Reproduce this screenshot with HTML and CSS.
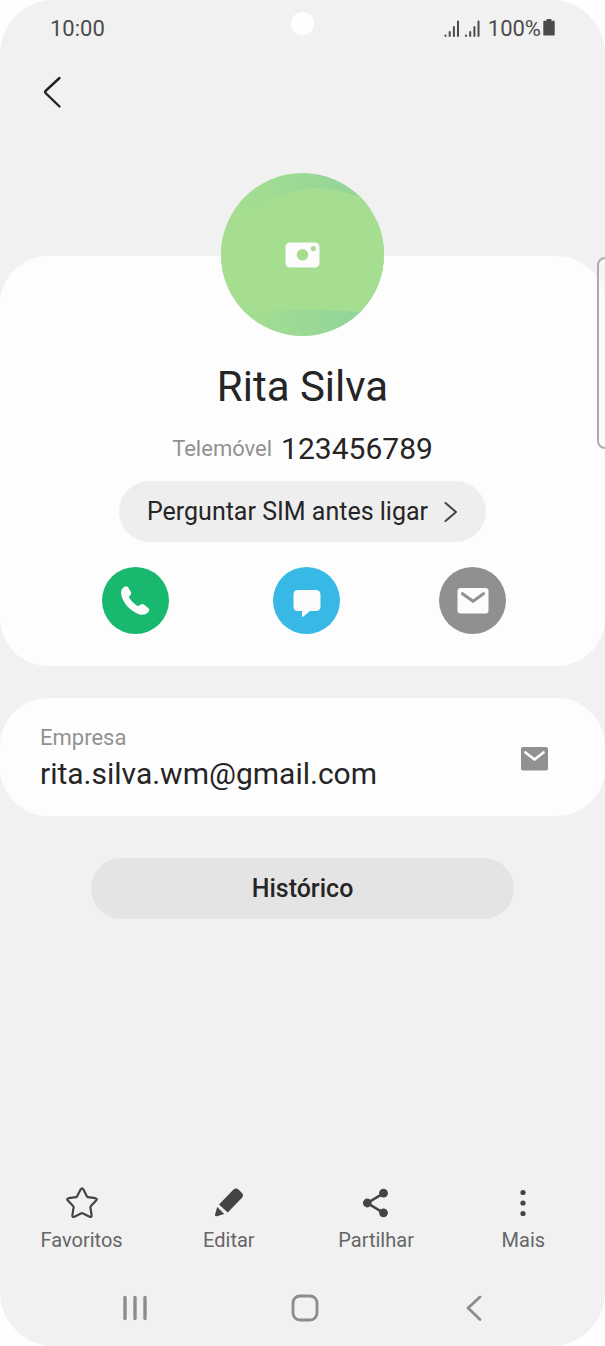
FILE: index.html
```html
<!DOCTYPE html>
<html lang="pt">
<head>
<meta charset="utf-8">
<meta name="viewport" content="width=device-width, initial-scale=1">
<title>Rita Silva</title>
<link rel="stylesheet" href="styles.css">
</head>
<body>
<div class="screen">
  <div class="camera-hole"></div>
  <div class="edge-handle"></div>

  <header class="status-bar">
    <span>10:00</span>
    <div class="status-icons">
      <svg class="signal" width="37" height="18" viewBox="0 0 37 18" aria-hidden="true">
        <path d="M1.500 15.500v.5M5.700 12v4M9.900 7v9M14 1.500V16M22 15.500v.5M26.200 12v4M30.400 7v9M34.500 1.500V16"/>
      </svg>
      <span>100%</span>
      <svg class="battery" width="12" height="21" viewBox="0 0 12 21" aria-hidden="true">
        <path fill="#4b4b4b" d="M3.500 1h5v1.800H11q1 0 1 1v13.700q0 1-1 1H1q-1 0-1-1V3.800q0-1 1-1h2.500z"/>
      </svg>
    </div>
  </header>

  <nav class="app-bar">
    <button class="icon-button" type="button" aria-label="Voltar">
      <svg width="20" height="34" viewBox="0 0 20 34" fill="none" stroke="#222" stroke-width="2.400" stroke-linecap="round" stroke-linejoin="round"><path d="M17.500 3 3.500 16q-1 1 0 2l14 13.500"/></svg>
    </button>
  </nav>

  <main class="content">
    <section class="card profile">
      <button class="avatar" type="button" aria-label="Alterar fotografia">
        <svg viewBox="0 0 163 163" aria-hidden="true">
          <defs>
            <clipPath id="round"><circle cx="81.500" cy="81.500" r="81.500"/></clipPath>
            <linearGradient id="shade" x1="0" x2="1">
              <stop offset="0.100" stop-color="#a5de90"/>
              <stop offset="0.900" stop-color="#90d49a"/>
            </linearGradient>
          </defs>
          <g clip-path="url(#round)">
            <path fill="url(#shade)" d="M0 0h163v163H0z"/>
            <path fill="#a5de90" d="M0 62Q54 15 96 15Q120 15 163 33V142Q90 132 0 141z"/>
          </g>
          <path fill="#fcfcfc" fill-rule="evenodd" d="M69.500 69.500h24q5 0 5 5v15q0 5-5 5h-24q-5 0-5-5v-15q0-5 5-5zM81.500 76a5.800 5.800 0 1 0 0 11.600 5.800 5.800 0 1 0 0-11.600zM92.300 73a2.600 2.600 0 1 0 0 5.200 2.600 2.600 0 1 0 0-5.200z"/>
        </svg>
      </button>
      <h1 class="name">Rita Silva</h1>
      <p class="phone"><span class="label">Telemóvel</span><span class="value">123456789</span></p>
      <button class="pill sim" type="button">
        Perguntar SIM antes ligar
        <svg width="14" height="22" viewBox="0 0 14 22" fill="none" stroke="#444" stroke-width="2" stroke-linecap="round" stroke-linejoin="round" aria-hidden="true"><path d="M1.500 2 12 11 1.500 20"/></svg>
      </button>
      <div class="actions">
        <button class="action call" type="button" aria-label="Ligar">
          <svg viewBox="0 0 67 67"><path fill="#fcfcfc" d="M22.500 19.800c1.500-1 2.800-.6 3.700.8l2.600 4.200c.8 1.400.5 2.500-.6 3.500l-1.500 1.400c1.800 3.800 5.200 7.200 9.400 9.600l2.600-1.700c1.300-.8 2.300-.7 3.500.2l4 3.200c1.300 1.200 1.500 2.500.4 3.800-2 2.600-5.500 3.600-9 2.600-9.600-3.400-17.200-11.500-18.500-20.900-.3-3.200.9-5.200 3.400-6.700z"/></svg>
        </button>
        <button class="action message" type="button" aria-label="Mensagem">
          <svg viewBox="0 0 67 67"><path fill="#fcfcfc" d="M25 23h17.500q5 0 5 5v11.500q0 4.500-5 4.500H37l-6.500 5.500q-1.500 1-1.500-.5v-5h-4q-4.500 0-4.500-4.500V28q0-5 4.500-5z"/></svg>
        </button>
        <button class="action mail" type="button" aria-label="E-mail">
          <svg viewBox="0 0 67 67" fill="none"><rect x="18.500" y="21" width="31" height="25.500" rx="3" fill="#fcfcfc"/><path stroke="#909090" stroke-width="3" stroke-linecap="round" stroke-linejoin="round" d="m23.500 26.700 10.500 7.500 10.500-7.500"/></svg>
        </button>
      </div>
    </section>

    <section class="card email">
      <div>
        <p class="label">Empresa</p>
        <p class="value">rita.silva.wm@gmail.com</p>
      </div>
      <button class="icon-button" type="button" aria-label="Enviar e-mail">
        <svg width="27" height="24" viewBox="0 0 27 24" fill="none"><rect y="0" width="27" height="23.500" rx="1.800" fill="#919191"/><path stroke="#fcfcfc" stroke-width="2.800" stroke-linecap="round" stroke-linejoin="round" d="m4.500 5.500 9 7 9-7"/></svg>
      </button>
    </section>

    <button class="pill history" type="button">Histórico</button>
  </main>

  <footer class="footer">
    <div class="tabs">
      <button class="tab" type="button">
        <svg width="34" height="34" viewBox="0 0 34 34" fill="none" stroke="#444" stroke-width="2.200" stroke-linejoin="round"><path d="M15.700 3.300q1.300-2 2.600 0L22 10.500q.2.500.8.600l7.600 1.100q2.200.5.900 2.100l-5.600 5.900q-.4.400-.3 1l1.200 8.100q.1 2.200-2 1.500l-7-3.500q-.6-.3-1.200 0l-7 3.500q-2.100.7-2-1.500l1.200-8.100q.1-.6-.3-1l-5.600-5.900q-1.300-1.600.9-2.100l7.600-1.100q.6-.1.800-.6z"/></svg>
        Favoritos
      </button>
      <button class="tab" type="button">
        <svg width="34" height="34" viewBox="0 0 34 34" fill="#444"><path d="M7 18.500 21 4q3-2.500 5.500-.5L30 7q2 2.500 0 4.700L15.700 26.500zM5.200 21l7 7-7.500 2.300q-1.900.3-1.700-1.500z"/></svg>
        Editar
      </button>
      <button class="tab" type="button">
        <svg width="34" height="34" viewBox="0 0 34 34" fill="#444"><path fill="none" stroke="#444" stroke-width="2.600" d="M24.500 7.300 8.300 17l16.200 9.800"/><circle cx="8.300" cy="17" r="4.400"/><circle cx="24.500" cy="7.200" r="4.400"/><circle cx="24.500" cy="26.800" r="4.400"/></svg>
        Partilhar
      </button>
      <button class="tab" type="button">
        <svg width="34" height="34" viewBox="0 0 34 34" fill="#444"><circle cx="17" cy="6.500" r="2.600"/><circle cx="17" cy="17" r="2.600"/><circle cx="17" cy="27.500" r="2.600"/></svg>
        Mais
      </button>
    </div>
    <nav class="system-nav">
      <button class="icon-button" type="button" aria-label="Recentes">
        <svg width="28" height="28" viewBox="0 0 28 28" stroke="#8c8c8c" stroke-width="3.400" stroke-linecap="round"><path d="M4 3.500v21M14 3.500v21M24 3.500v21"/></svg>
      </button>
      <button class="icon-button" type="button" aria-label="Início">
        <svg width="28" height="28" viewBox="0 0 28 28" fill="none" stroke="#8c8c8c" stroke-width="2.800"><rect x="2" y="2" width="24" height="24" rx="7"/></svg>
      </button>
      <button class="icon-button" type="button" aria-label="Anterior">
        <svg width="28" height="28" viewBox="0 0 28 28" fill="none" stroke="#8c8c8c" stroke-width="2.800" stroke-linecap="round" stroke-linejoin="round"><path d="M20 3 8 14l12 11.500"/></svg>
      </button>
    </nav>
  </footer>
</div>
</body>
</html>
```

FILE: styles.css
```css
* {
  box-sizing: border-box;
}

body {
  margin: 0;
  background: #fefefe;
  color: #252525;
  font-family: Roboto, "Noto Sans", sans-serif;
}

h1,
p {
  margin: 0;
  font-weight: 400;
}

button {
  border: 0;
  padding: 0;
  background: none;
  color: inherit;
  font: inherit;
  cursor: pointer;
}

svg {
  display: block;
}

.screen {
  position: relative;
  display: flex;
  flex-direction: column;
  min-height: 100vh;
  overflow: hidden;
  border-radius: 54px;
  background: #f1f1f1;
}

.camera-hole {
  position: absolute;
  top: 12px;
  left: 50%;
  width: 23px;
  height: 23px;
  margin-left: -12px;
  border-radius: 50%;
  background: #fefefe;
}

.edge-handle {
  position: absolute;
  z-index: 1;
  top: 257px;
  right: -8px;
  width: 16px;
  height: 192px;
  border: 2px solid #adadad;
  border-radius: 8px;
  background: rgb(250 250 250 / 50%);
}

.status-bar {
  display: flex;
  align-items: center;
  justify-content: space-between;
  height: 57px;
  padding: 0 50px;
  color: #4b4b4b;
  font-size: 22px;
}

.status-icons {
  display: flex;
  align-items: center;
}

.signal {
  margin-right: 7px;
  fill: none;
  stroke: #4b4b4b;
  stroke-width: 2;
  stroke-linecap: round;
}

.battery {
  margin-left: 2px;
  padding-bottom: 1px;
}

.app-bar {
  height: 69px;
  padding: 18px 42px;
}

.content {
  display: flex;
  flex-direction: column;
  gap: 32px;
  padding-top: 130px;
}

.card {
  border-radius: 48px;
  background: #fdfdfd;
}

.profile {
  display: flex;
  flex-direction: column;
  align-items: center;
  padding-bottom: 32px;
}

.avatar {
  width: 163px;
  margin-top: -83px;
  border-radius: 50%;
}

.name {
  margin-top: 26px;
  font-size: 42px;
  line-height: 50px;
}

.phone {
  display: flex;
  align-items: center;
  gap: 9px;
  margin-top: 19px;
  line-height: 36px;
}

.label {
  color: #929292;
  font-size: 22px;
}

.value {
  font-size: 30px;
}

.pill {
  display: flex;
  align-items: center;
  justify-content: center;
  height: 61px;
  border-radius: 31px;
  font-size: 25px;
}

.sim {
  gap: 16px;
  margin-top: 14px;
  padding: 0 28px;
  background: #eee;
}

.actions {
  display: grid;
  grid-template-columns: 170fr 166fr auto;
  align-self: stretch;
  margin-top: 25px;
  padding: 0 99px 0 102px;
}

.action {
  width: 67px;
  height: 67px;
  border-radius: 50%;
}

.call {
  background: #18b86e;
}

.message {
  background: #38b8e4;
}

.mail {
  background: #909090;
}

.email {
  display: flex;
  align-items: center;
  justify-content: space-between;
  padding: 25px 57px 21px 40px;
}

.email .label {
  line-height: 30px;
}

.email .value {
  line-height: 42px;
}

.history {
  align-self: center;
  width: 70%;
  margin-top: 10px;
  background: #e4e4e4;
  font-weight: 500;
}

.footer {
  margin-top: auto;
}

.tabs {
  display: grid;
  grid-template-columns: repeat(4, 1fr);
  padding: 0 8px;
}

.tab {
  display: flex;
  flex-direction: column;
  align-items: center;
  gap: 7px;
  color: #666;
  font-size: 20px;
  line-height: 26px;
}

.system-nav {
  display: flex;
  justify-content: space-between;
  padding: 41px 117px 24px 121px;
}
```
